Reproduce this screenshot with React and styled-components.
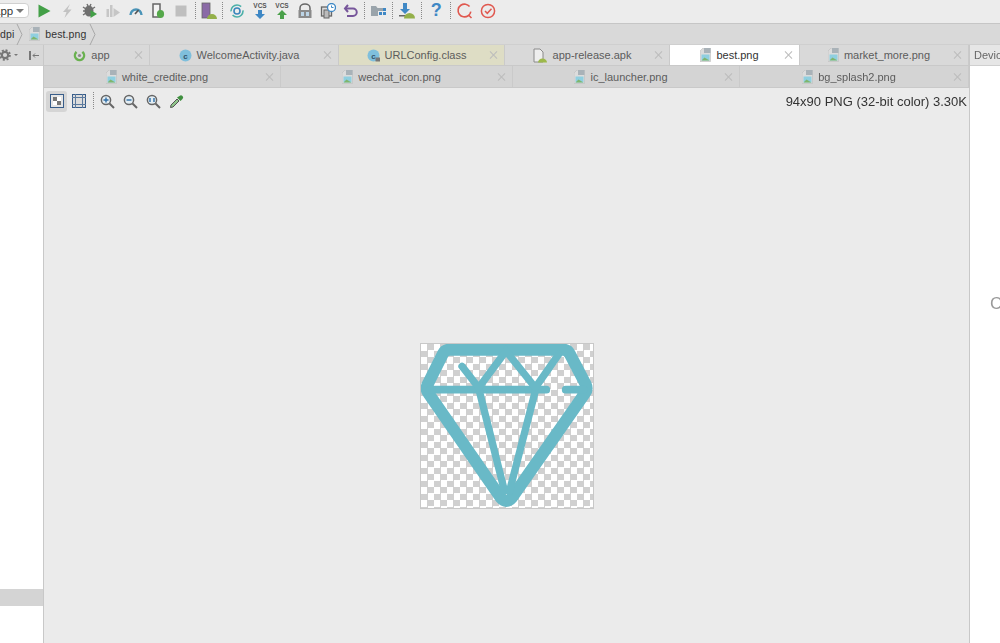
import React from 'react'
import styled, {createGlobalStyle} from 'styled-components'

const Global = createGlobalStyle`
html, body {
  margin: 0;
  padding: 0;
  background: #ebebeb;
}
* { box-sizing: border-box; }
`

const Page = styled.div`
width: 1000px;
height: 643px;
overflow: hidden;
display: flex;
flex-direction: column;
font-family: "Liberation Sans", Arial, sans-serif;
color: #555;
filter: blur(0.35px);
`

const Toolbar = styled.div`
height: 24px;
flex: none;
display: flex;
align-items: center;
padding-bottom: 2px;
background: #ececec;
border-bottom: 1px solid #c6c6c6;
`

const RunConfig = styled.div`
width: 41px;
height: 15px;
margin-left: -12px;
margin-right: 4px;
flex: none;
display: flex;
align-items: center;
gap: 3px;
padding-left: 5px;
background: #fff;
border: 1px solid #d0d0d0;
border-radius: 4px;
font-size: 11.5px;
color: #333;
`

const Caret = styled.span`
width: 0;
height: 0;
border-left: ${p => p.$s || 4}px solid transparent;
border-right: ${p => p.$s || 4}px solid transparent;
border-top: ${p => p.$s || 4}px solid #777;
`

const ToolButton = styled.div`
width: 22.8px;
height: 20px;
flex: none;
display: flex;
align-items: center;
justify-content: center;
`

const Dots = styled.div`
width: ${p => p.$w || 5}px;
height: 18px;
flex: none;
margin-left: ${p => p.$ml || 0}px;
background: linear-gradient(to bottom, #888 50%, transparent 50%) center / 1px 2px repeat-y;
`

const Crumbs = styled.div`
height: 21px;
flex: none;
display: flex;
align-items: center;
background: #d9d9d9;
font-size: 10.5px;
color: #333;
letter-spacing: 0.1px;
border-bottom: 1px solid #cfcfcf;
`

const Crumb = styled.div`
display: flex;
align-items: center;
gap: 5px;
margin-left: ${p => p.$ml || 0}px;
`

const Body = styled.div`
flex: 1;
min-height: 0;
display: grid;
grid-template-columns: 44px 925px 31px;
`

const LeftPane = styled.div`
display: flex;
flex-direction: column;
background: #fff;
border-right: 1px solid #c8c8c8;
`

const PaneHead = styled.div`
height: 21px;
flex: none;
display: flex;
align-items: center;
gap: 3px;
margin-left: -1px;
background: #d8d8d8;
border-bottom: 1px solid #cfcfcf;
`

const HideSlot = styled.div`
margin-left: 7px;
display: flex;
`

const TreeGap = styled.div`
height: 523px;
flex: none;
`

const TreeRow = styled.div`
height: 17px;
flex: none;
background: #d4d4d4;
`

const Center = styled.div`
display: flex;
flex-direction: column;
min-width: 0;
`

const TabRow = styled.div`
height: ${p => p.$h}px;
flex: none;
display: flex;
background: ${p => p.$bg};
border-bottom: 1px solid #c9c9c9;
`

const Tab = styled.div`
width: ${p => p.$w}px;
flex: none;
display: flex;
align-items: center;
padding-left: 5px;
background: ${p => p.$active ? '#fff' : p.$pinned ? '#deddc5' : 'transparent'};
border-right: 1px solid #cacaca;
font-size: 11px;
color: ${p => p.$active ? '#333' : '#5c5c5c'};
`

const TabBody = styled.div`
flex: 1;
min-width: 0;
display: flex;
align-items: center;
justify-content: center;
gap: 5px;
white-space: nowrap;
`

const Close = styled.span`
width: 8px;
height: 8px;
flex: none;
margin-right: 7px;
position: relative;
&::before, &::after {
  content: "";
  position: absolute;
  left: 3.5px;
  top: -1px;
  width: 1px;
  height: 10px;
  background: #bcbcbc;
}
&::before { transform: rotate(45deg); }
&::after { transform: rotate(-45deg); }
`

const ViewerBar = styled.div`
height: 26px;
flex: none;
display: flex;
align-items: center;
padding-left: 2px;
padding-right: 2px;
`

const ModeButton = styled.div`
width: 21px;
height: 21px;
margin-right: 1px;
flex: none;
display: flex;
align-items: center;
justify-content: center;
border-radius: 3px;
background: ${p => p.$on ? '#d5d5d5' : 'transparent'};
`

const ZoomButton = styled.div`
width: 23px;
height: 21px;
flex: none;
display: flex;
align-items: center;
justify-content: center;
`

const ImageInfo = styled.div`
margin-left: auto;
font-size: 13px;
color: #333;
white-space: nowrap;
`

const Viewer = styled.div`
flex: 1;
display: flex;
justify-content: center;
padding-top: 229px;
background: #ebebeb;
`

const Checker = styled.div`
width: 174px;
height: 166px;
border: 1px solid #c8c8c8;
background-color: #fff;
background-image: repeating-conic-gradient(#d0d0d0 0 25%, #fff 0 50%);
background-size: 13px 13px;
`

const RightPane = styled.div`
display: flex;
flex-direction: column;
background: #fff;
border-left: 1px solid #c8c8c8;
overflow: hidden;
`

const RightHead = styled.div`
height: 21px;
flex: none;
display: flex;
align-items: center;
padding-left: 4px;
background: #e6e6e6;
border-bottom: 1px solid #cfcfcf;
font-size: 11px;
color: #666;
white-space: nowrap;
`

const RightLabel = styled.div`
padding-top: 228px;
padding-left: 20px;
font-size: 17px;
color: #999;
`

const Svg = ({size = 16, w, h, children}) => (
    <svg width={w || size} height={h || size} viewBox={`0 0 ${w || size} ${h || size}`} style={{flex: 'none', display: 'block'}}>{children}</svg>
)

const PngIcon = () => (
    <Svg w={11} h={14}>
        <path d="M0 3L3 0H10.5V13.5H0Z" fill="#dcdcdc" stroke="#bdbdbd" strokeWidth="0.6"/>
        <path d="M4 0H10.5V5H4Z" fill="#a9b2b8"/>
        <rect x="1.5" y="6.5" width="8" height="6" fill="#8fcfe0"/>
        <path d="M1.5 12.5L4.5 9.5L9.5 12.5Z" fill="#7fb56d"/>
    </Svg>
)

const ClassIcon = ({locked}) => (
    <Svg size={13}>
        <circle cx="6.5" cy="6.5" r="6" fill="#7fbfdc"/>
        <text x="6.5" y="9.5" textAnchor="middle" fontSize="8" fontWeight="700" fill="#33536b" fontFamily="Liberation Sans">c</text>
        {locked && <rect x="8.5" y="8.5" width="4.5" height="4" fill="#777"/>}
    </Svg>
)

const ModuleIcon = () => (
    <Svg size={13}>
        <circle cx="6.5" cy="6.5" r="4.6" fill="none" stroke="#69b14f" strokeWidth="2.4" strokeDasharray="22 6" transform="rotate(-50 6.5 6.5)"/>
        <circle cx="6.5" cy="6.5" r="1.6" fill="#8a8a8a"/>
    </Svg>
)

const ApkIcon = () => (
    <Svg w={15} h={15}>
        <path d="M1 1H7L10 4V14H1Z" fill="#eee" stroke="#8a8a8a" strokeWidth="1"/>
        <path d="M5 14.5a4.5 4 0 0 1 9 0Z" fill="#9db94a"/>
    </Svg>
)

const Chevron = () => (
    <Svg w={7} h={21}>
        <path d="M1 0L6 10.5L1 21" fill="none" stroke="#a8a8a8" strokeWidth="1"/>
    </Svg>
)

function VcsIcon({color, down}) {
    return (
        <Svg size={18}>
            <text x="9" y="6" textAnchor="middle" fontSize="6.5" fontWeight="700" fill="#555" fontFamily="Liberation Sans">VCS</text>
            {down
                ? <path d="M7 8H11V12H14L9 17L4 12H7Z" fill={color}/>
                : <path d="M9 8L14 13H11V17H7V13H4Z" fill={color}/>}
        </Svg>
    )
}

const runTools = [
    <Svg size={16}><path d="M2.5 1.5L14.5 8L2.5 14.5Z" fill="#43a047"/></Svg>,
    <Svg size={16}><path d="M11 1L4 9H7.5L5.5 15L12.5 6.5H8.5Z" fill="#c2c2c2"/></Svg>,
    <Svg size={16}>
        <ellipse cx="7" cy="8" rx="4.5" ry="5.5" fill="#6f6f6f"/>
        <path d="M1 4L4 6M1 8H3M1 12L4 10M13 4L10 6M5 1L6 3M9 1L8 3" stroke="#6f6f6f" strokeWidth="1.4"/>
        <path d="M8.5 7L15 11L8.5 15Z" fill="#43a047"/>
    </Svg>,
    <Svg size={16}>
        <rect x="1.5" y="6" width="2.5" height="8" fill="#c6c6c6"/>
        <rect x="5" y="2" width="2.5" height="12" fill="#c6c6c6"/>
        <path d="M8.5 5L15 9.5L8.5 14Z" fill="#c6c6c6"/>
    </Svg>,
    <Svg size={16}>
        <path d="M2.5 12A5.5 5.5 0 0 1 13.5 12" fill="none" stroke="#4a94b8" strokeWidth="2.4"/>
        <path d="M7 11L10.5 7" stroke="#555" strokeWidth="1.6"/>
    </Svg>,
    <Svg size={16}>
        <path d="M3 1H10V14H3Z" fill="#f4f4f4" stroke="#666" strokeWidth="1.5"/>
        <ellipse cx="10.5" cy="11" rx="3.6" ry="4" fill="#55a84a"/>
    </Svg>,
    <Svg size={16}><rect x="2.5" y="2.5" width="11" height="11" fill="#bfbfbf"/></Svg>,
]

const avdTool = (
    <Svg size={18}>
        <rect x="2" y="1" width="8" height="15" fill="#8a6aa6" stroke="#666" strokeWidth="0.8"/>
        <path d="M7 17a5 5 0 0 1 10 0Z" fill="#94b04a"/>
    </Svg>
)

const vcsTools = [
    <Svg size={16}>
        <circle cx="8" cy="8" r="6" fill="none" stroke="#4bb0a8" strokeWidth="1.6" strokeDasharray="14 4"/>
        <circle cx="8" cy="8" r="3" fill="none" stroke="#3b86bd" strokeWidth="1.6"/>
    </Svg>,
    <VcsIcon color="#3f88c5" down/>,
    <VcsIcon color="#4aa04a"/>,
    <Svg size={16}>
        <path d="M3 8V5a5 4 0 0 1 10 0V8" fill="none" stroke="#666" strokeWidth="1.5"/>
        <rect x="1.5" y="7" width="13" height="8" fill="#8a8a8a"/>
        <rect x="4" y="9" width="3" height="4" fill="#bcd4e6"/>
        <rect x="9" y="9" width="3" height="4" fill="#bcd4e6"/>
    </Svg>,
    <Svg size={16}>
        <rect x="1.5" y="4" width="10" height="9" fill="#ddd" stroke="#666" strokeWidth="1.3"/>
        <rect x="4" y="7" width="5" height="8" fill="#bbb" stroke="#666" strokeWidth="1"/>
        <circle cx="11.5" cy="4.5" r="4" fill="#fff" stroke="#3f88c5" strokeWidth="1.3"/>
        <path d="M11.5 2.5V4.5H13.5" fill="none" stroke="#3f88c5" strokeWidth="1"/>
    </Svg>,
    <Svg size={16}>
        <path d="M5 2L2 5.5L5 9" fill="none" stroke="#77569b" strokeWidth="2"/>
        <path d="M2.5 5.5H10a3.5 3.5 0 0 1 0 7.5H4" fill="none" stroke="#77569b" strokeWidth="2"/>
    </Svg>,
]

const StructureIcon = () => (
    <Svg size={16}>
        <path d="M1 3H6L7.5 5H13V8H8V13H1Z" fill="#9aa4ab"/>
        <rect x="9" y="9" width="3" height="3" fill="#3f88c5"/>
        <rect x="13" y="9" width="3" height="3" fill="#3f88c5"/>
        <rect x="13" y="5" width="3" height="3" fill="#3f88c5"/>
    </Svg>
)

const SdkIcon = () => (
    <Svg size={18}>
        <path d="M5 1H9V7H12L7 12L2 7H5Z" fill="#3f88c5"/>
        <rect x="1" y="13" width="8" height="1.5" fill="#666"/>
        <path d="M6 16.5a5.5 5.5 0 0 1 11 0Z" fill="#94b04a"/>
    </Svg>
)

const QIcon = () => (
    <Svg size={18}>
        <circle cx="8.5" cy="8.5" r="6.4" fill="none" stroke="#e0584f" strokeWidth="1.6" strokeDasharray="34 6" transform="rotate(10 8.5 8.5)"/>
        <path d="M12.5 13L15.5 16" stroke="#e0584f" strokeWidth="1.6"/>
    </Svg>
)

const CheckIcon = () => (
    <Svg size={16}>
        <circle cx="8" cy="8" r="6.6" fill="none" stroke="#e0584f" strokeWidth="1.5"/>
        <path d="M5 8L7.3 10.3L11.5 5.8" fill="none" stroke="#e0584f" strokeWidth="1.5"/>
    </Svg>
)

const Help = styled.span`
font-size: 18px;
font-weight: 700;
color: #3f88c5;
`

const GearIcon = () => (
    <Svg w={12} h={12}>
        <circle cx="6" cy="6" r="3.2" fill="none" stroke="#777" strokeWidth="2.2"/>
        <circle cx="6" cy="6" r="4.9" fill="none" stroke="#777" strokeWidth="1.8" strokeDasharray="2 1.85"/>
    </Svg>
)

const HideIcon = () => (
    <Svg w={12} h={11}>
        <rect x="1" y="1" width="2" height="9" fill="#777"/>
        <path d="M11 5.5H5M7 3.5L5 5.5L7 7.5" fill="none" stroke="#777" strokeWidth="1"/>
    </Svg>
)

const FitIcon = () => (
    <Svg size={14}>
        <rect x="0.5" y="0.5" width="13" height="13" fill="#e5e5e5" stroke="#385d8a"/>
        <rect x="3" y="3" width="4" height="4" fill="#777"/>
        <rect x="7" y="7" width="4" height="4" fill="#777"/>
        <rect x="7" y="3" width="4" height="4" fill="#fff"/>
        <rect x="3" y="7" width="4" height="4" fill="#fff"/>
    </Svg>
)

const GridIcon = () => (
    <Svg size={14}>
        <rect x="0.5" y="0.5" width="13" height="13" fill="#dcdcdc" stroke="#385d8a"/>
        <path d="M3.5 0V14M10.5 0V14M0 3.5H14M0 10.5H14" stroke="#5c7a9e" strokeWidth="1"/>
    </Svg>
)

const Lens = ({children}) => (
    <Svg size={15}>
        <circle cx="6" cy="6" r="4.6" fill="#e4eef4" stroke="#666" strokeWidth="1.5"/>
        <path d="M9.5 9.5L14 14" stroke="#666" strokeWidth="2"/>
        {children}
    </Svg>
)

const Picker = () => (
    <Svg size={15}>
        <path d="M1.5 13.5L2 11L8 5L10 7L4 13Z" fill="#8fc48a" stroke="#555" strokeWidth="1"/>
        <path d="M8 3.5L11.5 7L13.5 5A2 2 0 0 0 10.5 2Z" fill="#3f8f3f"/>
    </Svg>
)

// top row then second row of editor tabs
const topTabs = [
    {w: 106, label: 'app', icon: <ModuleIcon/>},
    {w: 189, label: 'WelcomeActivity.java', icon: <ClassIcon/>},
    {w: 166, label: 'URLConfig.class', icon: <ClassIcon locked/>, pinned: true},
    {w: 165, label: 'app-release.apk', icon: <ApkIcon/>},
    {w: 130, label: 'best.png', icon: <PngIcon/>, active: true},
    {w: 169, label: 'market_more.png', icon: <PngIcon/>},
]

const bottomTabs = [
    {w: 237, label: 'white_credite.png'},
    {w: 232, label: 'wechat_icon.png'},
    {w: 227, label: 'ic_launcher.png'},
    {w: 229, label: 'bg_splash2.png'},
]

function Diamond() {
    return (
        <svg width="172" height="164" viewBox="32 29 516 492" style={{display: 'block'}}>
            <g fill="none" stroke="#69b9c7" strokeLinejoin="round" strokeLinecap="round">
                <path d="M118 46H458Q472 46 478 58L526 150Q533 165 523 178L305 490Q288 510 271 490L55 178Q45 165 52 150L98 58Q104 46 118 46Z" strokeWidth="36"/>
                <path d="M60 166H408M466 166H520" strokeWidth="23"/>
                <path d="M155 96L205 160L287 50L375 160L445 60" strokeWidth="22" strokeLinejoin="miter"/>
                <path d="M207 170L285 480M375 170L295 480" strokeWidth="22" strokeLinecap="butt"/>
            </g>
        </svg>
    )
}

export default function App() {
    return (
        <Page>
            <Global/>
            <Toolbar>
                <RunConfig>app<Caret/></RunConfig>
                {runTools.map((t, i) => <ToolButton key={i}>{t}</ToolButton>)}
                <Dots/>
                <ToolButton>{avdTool}</ToolButton>
                <Dots/>
                {vcsTools.map((t, i) => <ToolButton key={i}>{t}</ToolButton>)}
                <Dots $w={4}/>
                <ToolButton><StructureIcon/></ToolButton>
                <Dots $w={7}/>
                <ToolButton><SdkIcon/></ToolButton>
                <Dots $w={6}/>
                <ToolButton><Help>?</Help></ToolButton>
                <Dots $w={6}/>
                <ToolButton><QIcon/></ToolButton>
                <ToolButton><CheckIcon/></ToolButton>
            </Toolbar>
            <Crumbs>
                <Crumb>dpi</Crumb>
                <Crumb $ml={2}><Chevron/></Crumb>
                <Crumb $ml={6}><PngIcon/>best.png</Crumb>
                <Crumb $ml={3}><Chevron/></Crumb>
            </Crumbs>
            <Body>
                <LeftPane>
                    <PaneHead>
                        <GearIcon/>
                        <Caret $s={2.5}/>
                        <HideSlot><HideIcon/></HideSlot>
                    </PaneHead>
                    <TreeGap/>
                    <TreeRow/>
                </LeftPane>
                <Center>
                    <TabRow $h={21} $bg="#d9d9d9">
                        {topTabs.map(t => (
                            <Tab key={t.label} $w={t.w} $active={t.active} $pinned={t.pinned}>
                                <TabBody>{t.icon}{t.label}</TabBody>
                                <Close/>
                            </Tab>
                        ))}
                    </TabRow>
                    <TabRow $h={22} $bg="#d4d4d4">
                        {bottomTabs.map(t => (
                            <Tab key={t.label} $w={t.w}>
                                <TabBody><PngIcon/>{t.label}</TabBody>
                                <Close/>
                            </Tab>
                        ))}
                    </TabRow>
                    <ViewerBar>
                        <ModeButton $on><FitIcon/></ModeButton>
                        <ModeButton><GridIcon/></ModeButton>
                        <Dots $ml={1} $w={5}/>
                        <ZoomButton><Lens><path d="M3.5 6H8.5M6 3.5V8.5" stroke="#2f6ea5" strokeWidth="1.4"/></Lens></ZoomButton>
                        <ZoomButton><Lens><path d="M3.5 6H8.5" stroke="#2f6ea5" strokeWidth="1.4"/></Lens></ZoomButton>
                        <ZoomButton><Lens><path d="M4 4V8M8 4V8" stroke="#2f6ea5" strokeWidth="1.4"/></Lens></ZoomButton>
                        <ZoomButton><Picker/></ZoomButton>
                        <ImageInfo>94x90 PNG (32-bit color) 3.30K</ImageInfo>
                    </ViewerBar>
                    <Viewer>
                        <Checker><Diamond/></Checker>
                    </Viewer>
                </Center>
                <RightPane>
                    <RightHead>Device File</RightHead>
                    <RightLabel>C</RightLabel>
                </RightPane>
            </Body>
        </Page>
    )
}
